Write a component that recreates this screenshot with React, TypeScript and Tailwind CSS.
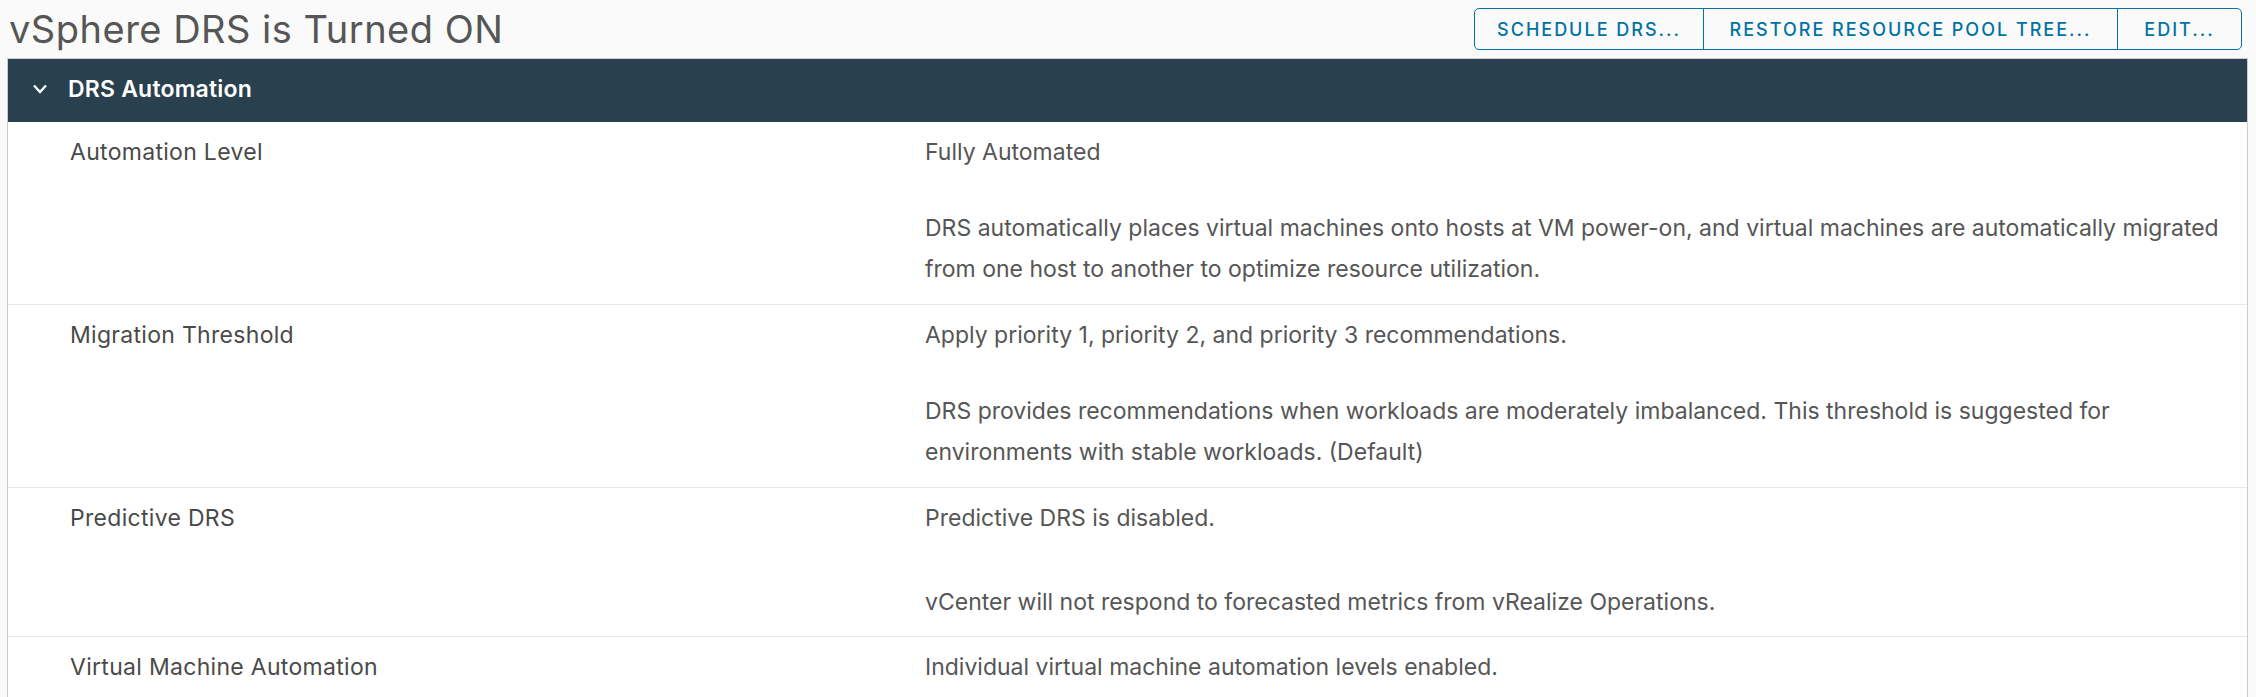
import React from "react";

const rows = [
  {
    label: "Automation Level",
    value: "Fully Automated",
    desc: [
      "DRS automatically places virtual machines onto hosts at VM power-on, and virtual machines are automatically migrated",
      "from one host to another to optimize resource utilization.",
    ],
    gap: "mt-[35px]",
    pb: "pb-[14px]",
  },
  {
    label: "Migration Threshold",
    value: "Apply priority 1, priority 2, and priority 3 recommendations.",
    desc: [
      "DRS provides recommendations when workloads are moderately imbalanced. This threshold is suggested for",
      "environments with stable workloads. (Default)",
    ],
    gap: "mt-[35px]",
    pb: "pb-[14px]",
  },
  {
    label: "Predictive DRS",
    value: "Predictive DRS is disabled.",
    desc: ["vCenter will not respond to forecasted metrics from vRealize Operations."],
    gap: "mt-[43px]",
    pb: "pb-[13px]",
  },
  {
    label: "Virtual Machine Automation",
    value: "Individual virtual machine automation levels enabled.",
    desc: [],
    gap: "",
    pb: "pb-[14px]",
  },
];

export default function App() {
  return (
    <div className="h-[697px] w-full overflow-hidden bg-[#fafafa] font-['Inter','Liberation_Sans',sans-serif] text-[#565656]">
      <div className="flex h-[58px] items-start justify-between pl-[9px] pr-[14px]">
        <h1 className="text-[38px] leading-[58px] font-normal tracking-[0.5px] text-[#565656]">vSphere DRS is Turned ON</h1>
        <div className="mt-[8px] flex h-[42px] overflow-hidden rounded-[5px] border border-[#0072a3] text-[18px] font-medium uppercase tracking-[2px] text-[#0072a3]">
          <button className="flex w-[228px] items-center justify-center">SCHEDULE DRS...</button>
          <button className="flex w-[414px] items-center justify-center border-l border-[#0072a3]">
            RESTORE RESOURCE POOL TREE...
          </button>
          <button className="flex w-[124px] items-center justify-center border-l border-[#0072a3]">EDIT...</button>
        </div>
      </div>
      <div className="ml-[7px] mr-[8px] border border-[#cccccc] bg-white">
        <div className="flex h-[63px] items-center bg-[#29414e] pb-[4px] text-white">
          <svg className="ml-[24px] h-[10px] w-[16px]" viewBox="0 0 16 10" fill="none">
            <polyline points="2,1.5 8,8 14,1.5" stroke="white" strokeWidth="2.4" />
          </svg>
          <span className="ml-[20px] text-[23px] font-semibold leading-[26px] tracking-[0.2px]">DRS Automation</span>
        </div>
        {rows.map((r, i) => (
          <div
            key={r.label}
            className={`flex pt-[10px] text-[23px] leading-[41px] ${r.pb} ${
              i < rows.length - 1 ? "border-b border-[#e8e8e8]" : ""
            }`}
          >
            <div className="w-[917px] shrink-0 pl-[62px] tracking-[0.3px] text-[#4a4a4a]">{r.label}</div>
            <div className="flex-1 whitespace-nowrap">
              <div>{r.value}</div>
              {r.desc.length > 0 && (
                <div className={r.gap}>
                  {r.desc.map((l) => (
                    <div key={l}>{l}</div>
                  ))}
                </div>
              )}
            </div>
          </div>
        ))}
      </div>
    </div>
  );
}
